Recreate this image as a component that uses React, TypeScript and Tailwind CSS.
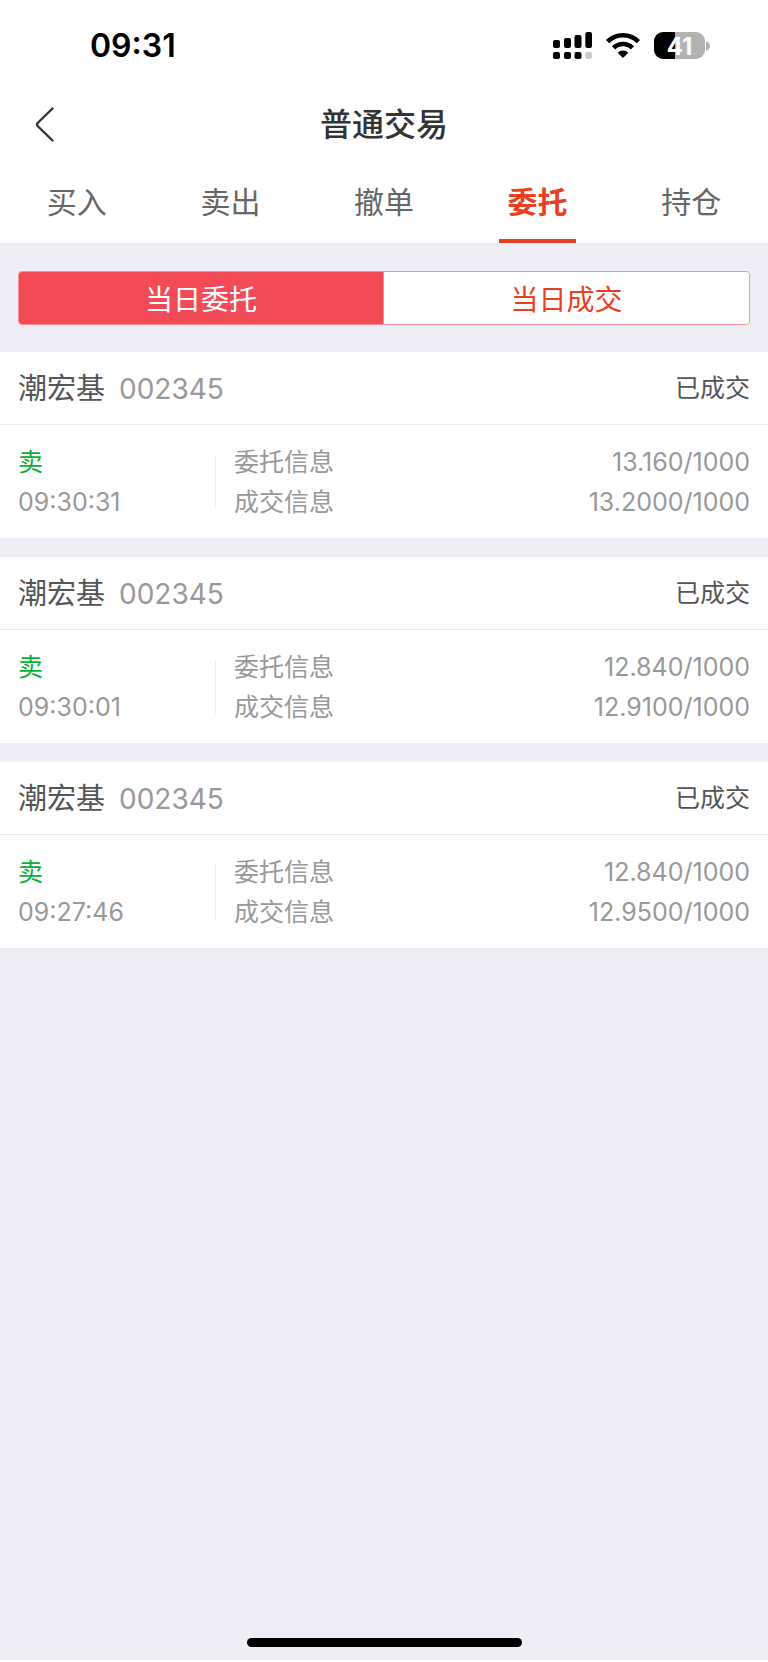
"use client";

const tabs = ["买入", "卖出", "撤单", "委托", "持仓"];

const orders = [
  { name: "潮宏基", code: "002345", status: "已成交", side: "卖", time: "09:30:31", order: "13.160/1000", deal: "13.2000/1000" },
  { name: "潮宏基", code: "002345", status: "已成交", side: "卖", time: "09:30:01", order: "12.840/1000", deal: "12.9100/1000" },
  { name: "潮宏基", code: "002345", status: "已成交", side: "卖", time: "09:27:46", order: "12.840/1000", deal: "12.9500/1000" },
];

function StatusBar() {
  return (
    <div className="flex h-[91px] items-center justify-between pl-[90px] pr-[58px] text-black">
      <span className="text-[32px] font-semibold leading-10">09:31</span>
      <div className="flex items-center gap-[14px]">
        {/* Signal */}
        <svg width="39" height="27" viewBox="0 0 39 27" fill="currentColor">
          <rect x="0" y="8" width="7" height="8" rx="2" />
          <rect x="11" y="6" width="7" height="10" rx="2" />
          <rect x="21.5" y="3" width="7" height="13" rx="2" />
          <rect x="32.3" y="0" width="6.7" height="16" rx="2" />
          <rect x="0" y="20" width="7" height="7" rx="2" />
          <rect x="11" y="20" width="7" height="7" rx="2" />
          <rect x="21.5" y="20" width="7" height="7" rx="2" />
          <rect x="32.3" y="20" width="6.7" height="7" rx="2" fill="#cccccc" />
        </svg>
        {/* Wi-Fi */}
        <svg width="34" height="25" viewBox="0 0 34 25" fill="none" stroke="currentColor" strokeWidth="4.6">
          <path d="M1.6 8.6a22 22 0 0 1 30.8 0" />
          <path d="M7.6 14.8a13.4 13.4 0 0 1 18.8 0" />
          <path d="M17 25l-5.3-5.3a7.6 7.6 0 0 1 10.6 0z" fill="currentColor" stroke="none" />
        </svg>
        {/* Battery */}
        <div className="flex items-center gap-px">
          <div className="flex h-[27px] w-[51px] items-center justify-center rounded-[9px] bg-linear-to-r from-black from-42% to-[#b2b2b2] to-42% pt-0.5 text-[24px] font-bold leading-none text-white">
            41
          </div>
          <svg width="4" height="10" viewBox="0 0 4 10" fill="#b2b2b2">
            <path d="M0 0c2.400 1 4 2.800 4 5s-1.600 4-4 5z" />
          </svg>
        </div>
      </div>
    </div>
  );
}

export default function App() {
  return (
    <div className="flex min-h-screen flex-col border-b-2 border-white bg-[#efeef4] font-['Inter','Noto_Sans_CJK_SC',sans-serif]">
      <header className="bg-white">
        <StatusBar />

        <div className="grid h-[68px] grid-cols-3 items-center px-[34px]">
          <button aria-label="返回" className="w-6 text-[#333333]">
            <svg width="22" height="36" viewBox="0 0 22 36" fill="none" stroke="currentColor" strokeWidth="2.4" strokeLinecap="round" strokeLinejoin="round">
              <path d="M18.500 1.500L3.600 16Q2.400 17.500 3.600 19L18.500 33.500" />
            </svg>
          </button>
          <h1 className="text-center text-[32px] font-medium leading-10 text-[#333333]">普通交易</h1>
        </div>

        <nav className="grid h-[84px] grid-cols-5">
          {tabs.map((tab) => (
            <a
              key={tab}
              href="#"
              className={
                tab === "委托"
                  ? "flex flex-col items-center justify-between pt-[23px] text-[30px] font-bold leading-10 text-[#e93f23]"
                  : "flex flex-col items-center justify-between pt-[23px] text-[30px] leading-10 text-[#666666]"
              }
            >
              {tab}
              {tab === "委托" && <span className="h-1 w-1/2 bg-[#e93f23]" />}
            </a>
          ))}
        </nav>
      </header>

      <div className="px-[18px] pb-[27px] pt-7">
        <div className="grid h-[54px] grid-cols-2 overflow-hidden rounded border border-[#f78f99] text-[28px] leading-10">
          <button className="border-r border-[#f78f99] bg-[#f34a58] pt-1 text-white">当日委托</button>
          <button className="bg-white pt-1 text-[#e93f23]">当日成交</button>
        </div>
      </div>

      <main className="flex flex-col gap-[19px]">
        {orders.map((item) => (
          <section key={item.time} className="bg-white">
            <div className="flex h-[73px] items-center justify-between border-b border-[#ececec] px-[18px] pt-0.5">
              <h2 className="flex items-center gap-[14px] text-[29px] text-[#555555]">
                {item.name}
                <span className="text-[28px] text-[#999999]">{item.code}</span>
              </h2>
              <span className="text-[25px] text-[#555555]">{item.status}</span>
            </div>

            <div className="flex h-[113px] items-center px-[18px] text-[25px] leading-10 text-[#999999]">
              <div className="w-[197px]">
                <p className="text-[#0bb03c]">{item.side}</p>
                <p>{item.time}</p>
              </div>
              <div className="h-[54px] w-px bg-[#eeeeee]" />
              <dl className="flex-1 pl-[18px]">
                <div className="flex justify-between">
                  <dt>委托信息</dt>
                  <dd>{item.order}</dd>
                </div>
                <div className="flex justify-between">
                  <dt>成交信息</dt>
                  <dd>{item.deal}</dd>
                </div>
              </dl>
            </div>
          </section>
        ))}
      </main>

      {/* Home indicator */}
      <div className="mx-auto mb-[13px] mt-auto h-[9px] w-[275px] rounded-full bg-black" />
    </div>
  );
}
